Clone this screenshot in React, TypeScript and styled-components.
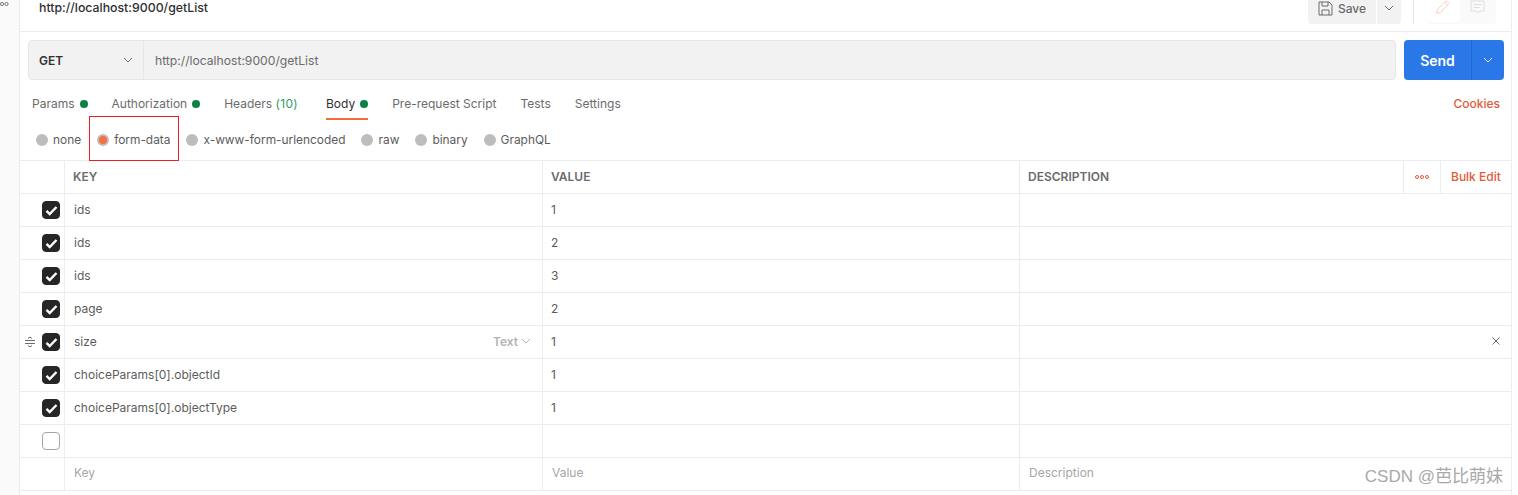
import styled, { createGlobalStyle } from 'styled-components'

const GlobalStyle = createGlobalStyle`
  html, body {
    margin: 0;
    padding: 0;
    height: 100%;
    background: #fff;
    overflow: hidden;
  }
  * { box-sizing: border-box; }
`

const Page = styled.div`
  display: flex;
  width: 1518px;
  height: 495px;
  font-family: Inter, 'Noto Sans', sans-serif;
  font-size: 12px;
  color: #6b6b6b;
  position: relative;
  overflow: hidden;
`

const SideRail = styled.aside`
  flex: 0 0 20px;
  background: #fafafa;
  border-right: 1px solid #ededed;
  position: relative;
`

const RailDots = styled.svg`
  position: absolute;
  left: 0;
  top: 1px;
`

const Main = styled.main`
  flex: 0 0 1492px;
  border-right: 1px solid #ededed;
  display: flex;
  flex-direction: column;
`

// 上部のタイトルバー
const TitleBar = styled.header`
  height: 32px;
  flex: none;
  display: flex;
  align-items: flex-start;
  justify-content: space-between;
  border-bottom: 1px solid #ededed;
  padding: 0 0 0 19px;
`

const TitleText = styled.div`
  font-size: 12.3px;
  font-weight: 500;
  color: #303030;
  line-height: 15px;
`

const TitleActions = styled.div`
  display: flex;
  align-items: flex-start;
  margin-right: 15px;
  margin-top: -8px;
`

const SaveButton = styled.div`
  width: 68px;
  height: 32px;
  background: #f2f2f2;
  border-radius: 0 0 0 4px;
  display: flex;
  align-items: center;
  justify-content: center;
  gap: 5px;
  font-weight: 500;
  font-size: 12px;
  color: #6b6b6b;
`

const SaveCaret = styled.div`
  width: 24px;
  height: 32px;
  margin-left: 1px;
  background: #f2f2f2;
  border-radius: 0 0 4px 0;
  display: flex;
  align-items: center;
  justify-content: center;
`

const Separator = styled.div`
  width: 1px;
  height: 32px;
  background: #e6e6e6;
  margin: 0 12px;
`

const GhostGroup = styled.div`
  width: 70px;
  height: 32px;
  background: #fafafa;
  border-radius: 0 0 4px 4px;
  display: flex;
`

const GhostIcon = styled.div<{ $active?: boolean }>`
  width: 34px;
  height: 30px;
  background: ${({ $active }) => ($active ? '#fff' : 'transparent')};
  border-radius: 0 0 4px 4px;
  display: flex;
  align-items: center;
  justify-content: center;
`

// URL 入力の行
const RequestRow = styled.div`
  flex: none;
  display: flex;
  gap: 8px;
  margin: 8px 7px 0 8px;
  height: 40px;
`

const UrlGroup = styled.div`
  flex: 1;
  display: flex;
  background: #f2f2f2;
  border: 1px solid #e6e6e6;
  border-radius: 4px;
`

const MethodSelect = styled.div`
  width: 115px;
  flex: none;
  display: flex;
  align-items: center;
  justify-content: space-between;
  padding: 0 10px;
  border-right: 1px solid #e6e6e6;
  font-weight: 600;
  color: #303030;
  font-size: 12px;
`

const UrlText = styled.div`
  display: flex;
  align-items: center;
  padding-left: 11px;
  color: #6b6b6b;
  font-size: 12.15px;
`

const SendButton = styled.div`
  flex: 0 0 100px;
  display: flex;
  background: #2a78e8;
  border-radius: 4px;
  color: #fff;
`

const SendLabel = styled.div`
  flex: 1;
  display: flex;
  align-items: center;
  justify-content: center;
  font-weight: 600;
  font-size: 14px;
  border-right: 1px solid #1f69d2;
`

const SendCaret = styled.div`
  flex: 0 0 32px;
  display: flex;
  align-items: center;
  justify-content: center;
`

// タブ
const TabRow = styled.nav`
  flex: none;
  height: 40px;
  display: flex;
  align-items: flex-start;
  padding: 0 11px 0 12px;
  gap: 24px;
`

const Tab = styled.div<{ $active?: boolean; $extra?: number }>`
  display: flex;
  align-items: center;
  gap: 5px;
  padding-top: 7px;
  height: 40px;
  font-size: 12px;
  color: ${({ $active }) => ($active ? '#303030' : '#6b6b6b')};
  margin-right: ${({ $extra }) => $extra ?? 0}px;
  box-shadow: ${({ $active }) => ($active ? 'inset 0 -2px 0 #f26b3a' : 'none')};
`

const GreenDot = styled.span`
  width: 8px;
  height: 8px;
  border-radius: 50%;
  background: #0a8043;
`

const TabCount = styled.span`
  color: #2f9a63;
  letter-spacing: 0.3px;
`

const Cookies = styled.div`
  margin-left: auto;
  padding-top: 7px;
  height: 40px;
  display: flex;
  align-items: center;
  color: #e05a38;
  font-size: 12px;
  font-weight: 500;
`

// ボディ種別のラジオ
const RadioRow = styled.div`
  flex: none;
  height: 40px;
  display: flex;
  align-items: flex-start;
  padding: 12px 0 0 16px;
  gap: 16px;
  font-size: 11.9px;
  color: #5c5c5c;
`

const RadioOption = styled.div<{ $highlighted?: boolean }>`
  display: flex;
  align-items: center;
  gap: 5px;
  height: 15px;
  position: relative;
  &::after {
    content: ${({ $highlighted }) => ($highlighted ? "''" : 'none')};
    box-sizing: border-box;
    position: absolute;
    left: -8px;
    top: -16px;
    width: 90px;
    height: 45px;
    border: 1px solid #ee1c25;
    pointer-events: none;
  }
`

const RadioDot = styled.span<{ $checked?: boolean }>`
  width: 12px;
  height: 12px;
  border-radius: 50%;
  background: ${({ $checked }) => ($checked ? '#f9703f' : '#bdbdbd')};
  border: ${({ $checked }) => ($checked ? '2px solid #bdbdbd' : 'none')};
`

// テーブル
const ParamTable = styled.div`
  flex: none;
  border-top: 1px solid #ededed;
  border-bottom: 1px solid #ededed;
`

const Row = styled.div`
  display: grid;
  grid-template-columns: 45px 478px 477px 384px 37px 1fr;
  height: 33px;
  border-bottom: 1px solid #ededed;
  &:last-child { border-bottom: none; height: 32px; }
`

const Cell = styled.div<{ $wide?: boolean }>`
  display: flex;
  align-items: center;
  padding: 0 9px 2px 8px;
  border-right: 1px solid #ededed;
  font-size: 12px;
  color: #5c5c5c;
  grid-column: ${({ $wide }) => ($wide ? 'span 3' : 'auto')};
  &:last-child { border-right: none; }
`

const HeadCell = styled(Cell)`
  font-weight: 600;
  color: #6b6b6b;
  padding: 0 8px 2px;
`

const CheckCell = styled.div`
  display: flex;
  align-items: center;
  justify-content: flex-end;
  padding-right: 4px;
  border-right: 1px solid #ededed;
  position: relative;
`

const DragHandle = styled.svg`
  position: absolute;
  left: 4px;
  top: 10px;
`

const CheckBox = styled.span<{ $checked?: boolean }>`
  width: 18px;
  height: 18px;
  border-radius: 4px;
  display: flex;
  align-items: center;
  justify-content: center;
  background: ${({ $checked }) => ($checked ? '#262626' : '#fff')};
  border: 1px solid ${({ $checked }) => ($checked ? '#262626' : '#a6a6a6')};
`

const KeyCell = styled(Cell)`
  justify-content: space-between;
  padding-left: 9px;
`

const TypePicker = styled.span`
  display: flex;
  align-items: center;
  gap: 3px;
  font-size: 12px;
  font-weight: 600;
  color: #b3b3b3;
  margin-right: 2px;
`

const Placeholder = styled(Cell)`
  color: #a6a6a6;
  padding-bottom: 4px;
  padding-left: 9px;
`

const MoreCell = styled(Cell)`
  justify-content: center;
  padding: 0;
`

const BulkEdit = styled(Cell)`
  color: #e05a38;
  font-weight: 500;
  font-size: 12px;
  padding: 0 0 1px 10px;
  white-space: nowrap;
`

const RemoveIcon = styled.svg`
  margin-left: auto;
  margin-right: 1px;
`

const Watermark = styled.div`
  position: absolute;
  right: 15px;
  bottom: 8px;
  font-family: 'Liberation Sans', 'Noto Sans CJK SC', sans-serif;
  font-size: 17px;
  color: #a8a8a8;
  line-height: 20px;
`

const Chevron = ({ color = '#6b6b6b', size = 10 }: { color?: string; size?: number }) => (
  <svg width={size} height={size} viewBox="0 0 10 10" fill="none">
    <path d="M1 3l4 4 4-4" stroke={color} strokeWidth="1" />
  </svg>
)

const Tick = () => (
  <svg width="13" height="13" viewBox="0 0 13 13" fill="none">
    <path d="M1.5 6.800l3.200 3.200 6.800-7" stroke="#fff" strokeWidth="2.400" />
  </svg>
)

const rows = [
  { key: 'ids', value: '1' },
  { key: 'ids', value: '2' },
  { key: 'ids', value: '3' },
  { key: 'page', value: '2' },
  { key: 'size', value: '1', hovered: true },
  { key: 'choiceParams[0].objectId', value: '1' },
  { key: 'choiceParams[0].objectType', value: '1' },
]

const App = () => (
  <>
    <GlobalStyle />
    <Page>
      <SideRail>
        <RailDots width="10" height="6" viewBox="0 0 10 6" fill="none">
          <circle cx="2" cy="3" r="1.6" stroke="#777" />
          <circle cx="6.5" cy="3" r="1.6" stroke="#777" />
        </RailDots>
      </SideRail>
      <Main>
        <TitleBar>
          <TitleText>http://localhost:9000/getList</TitleText>
          <TitleActions>
            <SaveButton>
              <svg width="15" height="15" viewBox="0 0 15 15" fill="none" stroke="#6b6b6b">
                <path d="M1 1h10l3 3v10H1z" />
                <path d="M4 1v4h6V1M4 14V9h7v5" />
              </svg>
              Save
            </SaveButton>
            <SaveCaret>
              <Chevron />
            </SaveCaret>
            <Separator />
            <GhostGroup>
              <GhostIcon $active>
                <svg width="16" height="16" viewBox="0 0 16 16" fill="none" stroke="#f9cfc2">
                  <path d="M1.500 14.500l1-4 8.500-9 3 3-8.500 9z" />
                  <path d="M9.500 3l3 3" />
                </svg>
              </GhostIcon>
              <GhostIcon>
                <svg width="15" height="15" viewBox="0 0 15 15" fill="none" stroke="#dedede">
                  <path d="M1 1h13v10H9l-1.500 2L6 11H1z" />
                  <path d="M3.500 4.500h8M3.500 7.500h6" />
                </svg>
              </GhostIcon>
            </GhostGroup>
          </TitleActions>
        </TitleBar>

        <RequestRow>
          <UrlGroup>
            <MethodSelect>
              GET
              <Chevron />
            </MethodSelect>
            <UrlText>http://localhost:9000/getList</UrlText>
          </UrlGroup>
          <SendButton>
            <SendLabel>Send</SendLabel>
            <SendCaret>
              <Chevron color="#fff" />
            </SendCaret>
          </SendButton>
        </RequestRow>

        <TabRow>
          <Tab>
            Params <GreenDot />
          </Tab>
          <Tab>
            Authorization <GreenDot />
          </Tab>
          <Tab $extra={4}>
            <span>
              Headers <TabCount>(10)</TabCount>
            </span>
          </Tab>
          <Tab $active>
            Body <GreenDot />
          </Tab>
          <Tab>Pre-request Script</Tab>
          <Tab>Tests</Tab>
          <Tab>Settings</Tab>
          <Cookies>Cookies</Cookies>
        </TabRow>

        <RadioRow>
          <RadioOption>
            <RadioDot />
            none
          </RadioOption>
          <RadioOption $highlighted>
            <RadioDot $checked />
            form-data
          </RadioOption>
          <RadioOption>
            <RadioDot />
            x-www-form-urlencoded
          </RadioOption>
          <RadioOption>
            <RadioDot />
            raw
          </RadioOption>
          <RadioOption>
            <RadioDot />
            binary
          </RadioOption>
          <RadioOption>
            <RadioDot />
            GraphQL
          </RadioOption>
        </RadioRow>

        <ParamTable>
          <Row>
            <CheckCell />
            <HeadCell>KEY</HeadCell>
            <HeadCell>VALUE</HeadCell>
            <HeadCell>DESCRIPTION</HeadCell>
            <MoreCell>
              <svg width="14" height="4" viewBox="0 0 14 4" fill="none" stroke="#e05a38">
                <circle cx="2" cy="2" r="1.500" />
                <circle cx="7" cy="2" r="1.500" />
                <circle cx="12" cy="2" r="1.500" />
              </svg>
            </MoreCell>
            <BulkEdit>Bulk Edit</BulkEdit>
          </Row>
          {rows.map((row, i) => (
            <Row key={i}>
              <CheckCell>
                {row.hovered && (
                  <DragHandle width="12" height="12" viewBox="0 0 12 12" fill="none" stroke="#6b6b6b">
                    <path d="M1 4.500h10M1 7.500h10M4 2.500l2-1.500 2 1.500M4 9.500l2 1.500 2-1.500" />
                  </DragHandle>
                )}
                <CheckBox $checked>
                  <Tick />
                </CheckBox>
              </CheckCell>
              <KeyCell>
                {row.key}
                {row.hovered && (
                  <TypePicker>
                    Text
                    <Chevron color="#b3b3b3" />
                  </TypePicker>
                )}
              </KeyCell>
              <Cell>{row.value}</Cell>
              <Cell $wide>
                {row.hovered && (
                  <RemoveIcon width="10" height="10" viewBox="0 0 10 10" fill="none" stroke="#6b6b6b">
                    <path d="M1.500 1.500l7 7M8.500 1.500l-7 7" />
                  </RemoveIcon>
                )}
              </Cell>
            </Row>
          ))}
          <Row>
            <CheckCell>
              <CheckBox />
            </CheckCell>
            <Cell />
            <Cell />
            <Cell $wide />
          </Row>
          <Row>
            <CheckCell />
            <Placeholder>Key</Placeholder>
            <Placeholder>Value</Placeholder>
            <Placeholder $wide>Description</Placeholder>
          </Row>
        </ParamTable>
      </Main>
      <Watermark>CSDN @芭比萌妹</Watermark>
    </Page>
  </>
)

export default App
